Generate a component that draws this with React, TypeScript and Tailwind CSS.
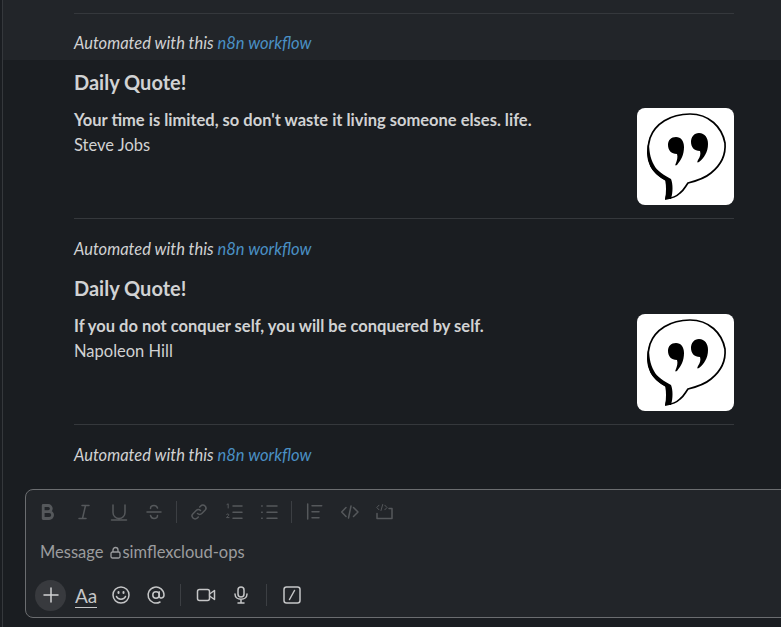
import React from "react";

const Bubble = () => (
  <svg viewBox="0 0 97 97" className="w-[97px] h-[97px]">
    <path d="M29 91 C30 85 30 77 29 72 C22 68 17 64 14 58 C10 50 10 40 13 30 C18 16 33 6 53 6 C72 6 85 19 88 35 C89 47 84 57 74 65 C67 71 59 73 51 75 C48 79 47 82 43 85 C40 88 36 90 29 91 Z" fill="#fff" stroke="#000" strokeWidth="1.7" />
    <path d="M12 32 C9 43 10 53 15 61 C19 67 25 70 29 73 C30 79 30 85 28 91 L34 91 C36 84 36 76 34 71 C27 67 20 63 17 57 C13 50 12 42 12 32 Z" fill="#000" />
    <path d="M39 29 C44 29 47 33 47 39 C47 47 44 52 40 57 C38 58 38 57 39 55 C40 52 41 49 40 46 C34 46 31 42 31 37 C31 32 34 29 39 29 Z" fill="#000" />
    <path d="M62 25 C68 25 71 30 71 36 C71 44 67 50 62 54 C60 55 60 54 61 52 C63 49 64 46 63 43 C57 43 54 39 54 34 C54 29 57 25 62 25 Z" fill="#000" />
  </svg>
);

const Automated = () => (
  <p className="italic text-[16.5px] leading-[22px] text-[#d1d2d3]">
    Automated with this <span className="text-[#4a90c4]">n8n workflow</span>
  </p>
);

const Quote = ({ quote, author }: { quote: string; author: string }) => (
  <div className="ml-[74px] w-[660px]">
    <h3 className="font-bold text-[20px] leading-[24px] pt-[10px] text-[#d1d2d3]">Daily Quote!</h3>
    <div className="flex justify-between mt-[2px]">
      <div className="pt-[12px] text-[16.5px] leading-[25px] text-[#d1d2d3]">
        <p className="font-bold">{quote}</p>
        <p>{author}</p>
      </div>
      <div className="mt-[12px] rounded-lg bg-white overflow-hidden">
        <Bubble />
      </div>
    </div>
    <div className="mt-[13px] border-t border-[#35383c]" />
    <div className="pt-[19px]">
      <Automated />
    </div>
  </div>
);

const I = ({ children }: { children: React.ReactNode }) => (
  <svg width={20} height={20} viewBox="0 0 20 20" fill="none" stroke="currentColor" strokeWidth="1.5" strokeLinecap="round" strokeLinejoin="round">
    {children}
  </svg>
);

const Sep = () => <span className="w-px h-[22px] bg-[#3c3f43] -mx-[3px]" />;
const Sep2 = () => <span className="w-px h-[22px] bg-[#3c3f43]" />;

export default function App() {
  return (
    <div className="w-[781px] h-[627px] overflow-hidden bg-[#1a1d21] pl-[2px] font-['Lato','Open_Sans',sans-serif]">
      <div className="h-full flex flex-col border-l border-[#35383c]">
        <div className="h-[60px] shrink-0 bg-[#222529] pl-[71px] pr-[47px] pt-[13px]">
          <div className="border-t border-[#35383c] pt-[18px]">
            <Automated />
          </div>
        </div>
        <div className="-ml-[3px]">
          <Quote quote="Your time is limited, so don't waste it living someone elses. life." author="Steve Jobs" />
          <div className="h-[6px]" />
          <Quote quote="If you do not conquer self, you will be conquered by self." author="Napoleon Hill" />
        </div>
        <div className="mt-[23px] -ml-[3px] pl-[25px]">
          <div className="w-[800px] h-[129px] rounded-lg border border-[#6b6d70] bg-[#222529]">
            <div className="h-[44px] flex items-center pl-[13px] gap-[15px] text-[#55585b]">
              <span className="ml-[-2px] mr-[2px] flex"><I><path d="M6.200 3.500h5a3 3 0 0 1 0 6.200h-5zM6.200 9.700h6a3.200 3.200 0 0 1 0 6.800h-6z" strokeWidth="2.800" /></I></span>
              <I><path d="M8 3.500h7M5 16.500h7M11.500 3.500l-3 13" /></I>
              <I><path d="M4 3v7.500a6 6 0 0 0 12 0V3M2.500 18h15" /></I>
              <I><path d="M3 10h14M13.500 6C13 4.500 11.500 3.500 10 3.500 8 3.500 6.500 4.800 6.500 6.500M6.500 13.500c.5 1.700 2 3 3.500 3 2 0 3.500-1.300 3.500-3" /></I>
              <Sep />
              <I><path d="M8.500 11.500a3 3 0 0 0 4.300 0l3.200-3.200a3 3 0 0 0-4.300-4.300l-1 1M11.500 8.500a3 3 0 0 0-4.300 0L4 11.700A3 3 0 0 0 8.300 16l1-1" /></I>
              <I><path d="M9 4h9M9 10.300h9M9 16.300h9" /><path d="M3 2.500l1.200-.7v4.200M2.500 12.500c.4-.8 2.300-.8 2.300.4 0 1-1.500 1.500-2.300 2.700h2.500" strokeWidth="1" /></I>
              <I><path d="M8 4h10M8 10.300h10M8 16.300h10M2.700 4h.5M2.700 10.300h.5M2.700 16.300h.5" /></I>
              <Sep />
              <I><path d="M3.700 2v15M8 3.700h9.700M8 9.700h7M8 15.700h7" /></I>
              <I><path d="M7 5.500L2.700 10 7 14.500M14.500 5.500L19 10l-4.500 4.500M12 4L9.500 16" /></I>
              <I><path d="M15 6.500h3v10H3V11.500" /><path d="M5 3.200L2.800 5.500 5 7.800M10.800 3.200L13 5.500l-2.200 2.300M8.700 2.500L7 8.500" strokeWidth="1" /></I>
            </div>
            <div className="h-[37px] pl-[14px] text-[16.5px] text-[#9b9c9e] flex items-center">
              <span>Message</span>
              <svg className="ml-[7px] mr-[1px]" width="11" height="13" viewBox="0 0 11 13" fill="none" stroke="currentColor" strokeWidth="1.300"><path d="M3 6V4a2.500 2.500 0 0 1 5 0v2" /><rect x="1" y="6" width="9" height="6" rx="1.500" /></svg>
              <span>simflexcloud-ops</span>
            </div>
            <div className="h-[46px] pt-[2px] flex items-center pl-[9px] text-[#c5c6c7]">
              <span className="w-[31px] h-[31px] rounded-full bg-[#383a3e] flex items-center justify-center text-[#d1d2d3]">
                <svg width="16" height="16" viewBox="0 0 16 16" stroke="currentColor" strokeWidth="1.500" strokeLinecap="round"><path d="M8 1v14M1 8h14" /></svg>
              </span>
              <span className="ml-[9px] text-[19px] leading-[22px] mt-[2px] border-b border-[#c5c6c7] font-normal">Aa</span>
              <span className="ml-[14px] flex"><I><circle cx="10" cy="10" r="8" /><path d="M5.500 11.500c1.200 3.500 7.800 3.500 9 0" /><path d="M7.500 7v1M12.500 7v1" strokeWidth="2" /></I></span>
              <span className="ml-[15px] flex"><I><circle cx="10" cy="10" r="3.200" /><path d="M13.200 6.800v4.200c0 3 4.800 2.500 4.800-1A8 8 0 1 0 14 17" /></I></span>
              <span className="ml-[14px] flex"><Sep2 /></span>
              <span className="ml-[15px] flex"><I><rect x="1.500" y="4.500" width="12" height="11" rx="2" /><path d="M13.500 9L18.500 5.500v9L13.500 11" /></I></span>
              <span className="ml-[15px] flex"><I><rect x="7" y="2" width="6" height="10" rx="3" /><path d="M4 9c0 7 12 7 12 0M10 14.500V18M7 18h6" /></I></span>
              <span className="ml-[15px] flex"><Sep2 /></span>
              <span className="ml-[15px] flex"><I><rect x="2" y="2" width="16" height="16" rx="2.500" /><path d="M12.500 5.500L7.500 14.500" /></I></span>
            </div>
          </div>
        </div>
      </div>
    </div>
  );
}
